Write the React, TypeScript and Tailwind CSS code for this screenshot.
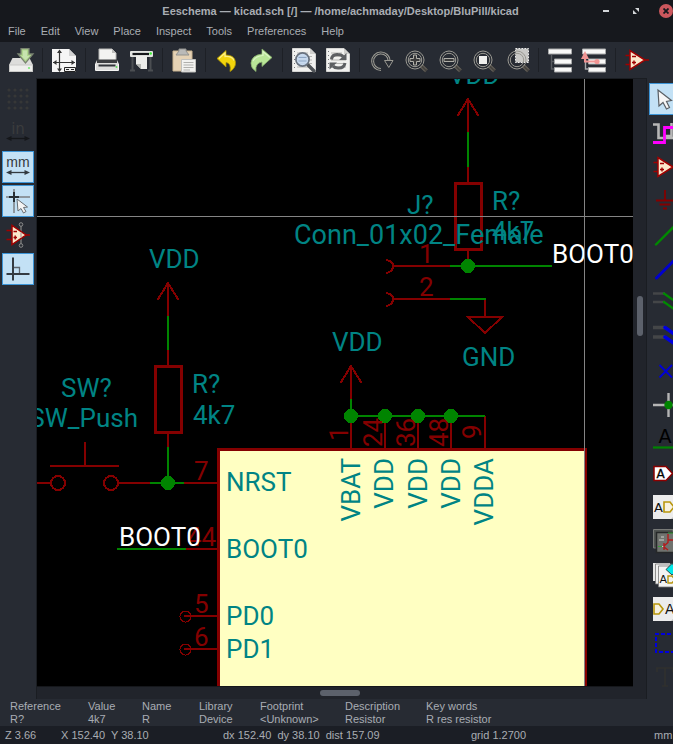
import React from "react";

const RED = "#840000";
const GREEN = "#008400";
const TEAL = "#008484";

/* ---------- icon helpers ---------- */

function Icon({ children }: { children: React.ReactNode }) {
  return (
    <svg width="24" height="24" viewBox="0 0 24 24" className="block shrink-0 overflow-visible" fill="none" aria-hidden="true">
      {children}
    </svg>
  );
}

function Lens({ children }: { children?: React.ReactNode }) {
  return (
    <g transform="translate(1.5 1)">
      <path d="M16.5 16.5 L22 22" stroke="#45433f" strokeWidth="4" />
      <path d="M16 18 L20.5 22.5 M18 16 L22.5 20.5" stroke="#77746c" strokeWidth="0.8" />
      <circle cx="10.5" cy="11" r="9" stroke="#9a9992" strokeWidth="1" />
      <circle cx="10.5" cy="11" r="6.7" stroke="#9a9992" strokeWidth="1" />
      {children}
    </g>
  );
}

function OpAmp() {
  return (
    <>
      <path d="M0.5 7.5 H5 M0.5 16.5 H5 M19 12 H24" stroke="#a00000" strokeWidth="1.5" />
      <path d="M5 2.5 V21.5 L20 12 Z" fill="#fbe9cc" stroke="#a00000" strokeWidth="1.5" />
      <path d="M7 8.5 H11 M7 14.5 H11 M9 12.5 V16.5" stroke="#a00000" strokeWidth="1.4" />
    </>
  );
}

function Sheet() {
  return (
    <>
      <path d="M0.5 0.5 H18 L23.5 6 V23.5 H0.5 Z" fill="#f1f1ef" stroke="#d4d4d2" />
      <path d="M18 0.5 V6 H23.5 Z" fill="#cfcfcc" />
      <path d="M2.5 3 V22" stroke="#77797c" strokeDasharray="1 3" />
      <path d="M5 5 H16 M5 8.5 H20 M5 12 H20 M5 15.5 H20 M5 19 H20" stroke="#b5b5b2" />
    </>
  );
}

const icons = {
  save: (
    <Icon>
      <path d="M3.5 10 H20.5 L24 17 V23 Q24 24 23 24 H1 Q0 24 0 23 V17 Z" fill="#dddddb" />
      <path d="M0.5 17 H23.5 V23.5 H0.5 Z" fill="#efefed" stroke="#c9c9c7" />
      <circle cx="20" cy="20" r="1.1" fill="#7bea77" />
      <path d="M12 0.7 H20 V6 H24 L16.5 15 L9 6 H12 Z" fill="#afd68d" stroke="#7a8471" strokeWidth="1.3" />
      <path d="M14 2.5 H18 V8 H20.5 L16.5 12 L12.5 8 H14 Z" fill="#c7e3af" />
    </Icon>
  ),
  page: (
    <Icon>
      <path d="M0 1 H17 L24 8 V24 H0 Z" fill="#f5f5f5" />
      <path d="M17 1 V8 H24 Z" fill="#d2d2d2" />
      <path d="M7.5 3 V23 M1 14.5 H23" stroke="#333" strokeWidth="1.2" />
      <path d="M7.5 1.5 L10 5 H5 Z M7.5 24 L10 20.5 H5 Z M1 14.5 L4.5 12 V17 Z M23 14.5 L19.5 12 V17 Z" fill="#333" />
      <path d="M12.5 19.5 H23.5 V23.5 H12.5 Z" fill="#eee" stroke="#222" />
      <path d="M14 21.5 H17 M19 21.5 H22" stroke="#222" />
    </Icon>
  ),
  print: (
    <Icon>
      <path d="M4 1 H17 L21 5 V13 H4 Z" fill="#f3f3f1" stroke="#b8b8b6" />
      <path d="M17 1 V5 H21 Z" fill="#bcbcba" />
      <path d="M2 12 H22 L24 16 V22 H0 V16 Z" fill="#dededc" />
      <path d="M2 11.5 H22 V15 H2 Z" fill="#3c3e40" />
      <path d="M3.5 17.5 H20.5" stroke="#33363a" strokeWidth="2" />
      <path d="M0.5 16 V22.5 H23.5 V16" stroke="#f6f6f4" />
      <circle cx="21.5" cy="19" r="1" fill="#5fe05a" />
    </Icon>
  ),
  plot: (
    <Icon>
      <path d="M3.5 8 V23 M21.5 8 V23" stroke="#4b4e52" strokeWidth="2" />
      <path d="M1 22.5 H6 M19 22.5 H24" stroke="#4b4e52" strokeWidth="2" />
      <path d="M2 3 H23 Q24 3 24 4 V8 Q24 9 23 9 H2 Q1 9 1 8 V4 Q1 3 2 3 Z" fill="#e2e4e1" />
      <path d="M3.5 6 H20" stroke="#15171a" strokeWidth="2.2" />
      <circle cx="21.7" cy="5.5" r="1.2" fill="#38f030" />
      <path d="M7 7.5 H18 V21 H12 L7 16 Z" fill="#ecedea" />
      <path d="M7 16 H12 V21 Z" fill="#b4b6b2" />
    </Icon>
  ),
  paste: (
    <Icon>
      <path d="M1 3 H20 V23 H1 Z" fill="#e5d2b5" stroke="#c9b491" />
      <path d="M7 1 H14 V3 L17 7 H4 L7 3 Z" fill="#babab8" stroke="#92928f" />
      <path d="M9.5 11.5 H23.5 V24 H9.5 Z" fill="#f2f2f0" stroke="#c0c0bd" />
      <path d="M11.5 14.5 H21.5 M11.5 17 H21.5 M11.5 19.5 H21.5 M11.5 22 H18" stroke="#b0b0ad" />
    </Icon>
  ),
  undo: (
    <Icon>
      <path
        d="M2 10.5 L11 2.5 V7 Q19.5 7 20.5 14 Q21 20 15 23.5 Q16.5 15 11 14.5 V19 Z"
        fill="#f2d40c"
        stroke="#a89204"
        strokeWidth="0.8"
      />
      <path d="M4 10.5 L10 5 V8.5 Q17 8 19 12.5" stroke="#fbee86" strokeWidth="1.3" />
    </Icon>
  ),
  redo: (
    <Icon>
      <path
        d="M23 9.5 L13 1 V6 Q3 7 2 15 Q1.5 20 7 23.5 Q6 15 13 14 V18.5 Z"
        fill="#b9e698"
        stroke="#87ad6c"
        strokeWidth="0.8"
      />
      <path d="M21 9.5 L14 3.5 V7.5 Q6 8.5 4 13" stroke="#dbf5c6" strokeWidth="1.2" />
    </Icon>
  ),
  find: (
    <Icon>
      <Sheet />
      <path d="M16 17 L22 23" stroke="#505458" strokeWidth="3.4" strokeLinecap="round" />
      <circle cx="10.5" cy="11.5" r="6.6" fill="#c3d7ee" fillOpacity="0.9" stroke="#68727f" strokeWidth="1.7" />
      <path d="M6.5 9.5 H14.5 M6.5 13 H14.5" stroke="#8ea6c4" />
    </Icon>
  ),
  replace: (
    <Icon>
      <Sheet />
      <path d="M5.5 11.5 Q6 6 12 6.5 Q15.5 6.5 17 8.5" stroke="#5d5f62" strokeWidth="3" />
      <path d="M20.5 5 V12 H13 Z" fill="#5d5f62" />
      <path d="M19 15 Q18 20.5 12 20 Q8.5 20 7 18" stroke="#5d5f62" strokeWidth="3" />
      <path d="M3.5 21.5 V14.5 H11 Z" fill="#5d5f62" />
    </Icon>
  ),
  redraw: (
    <Icon>
      <g transform="translate(1 1)">
        <path d="M11 20.5 A8.3 8.3 0 1 1 19.2 12" stroke="#9a9992" strokeWidth="3" />
        <path d="M11.5 20.5 A8.3 8.3 0 1 1 19.2 12" stroke="#292d34" strokeWidth="1" />
        <path d="M14.5 11.5 H23 L18.8 18.5 Z" fill="#292d34" stroke="#9a9992" />
      </g>
    </Icon>
  ),
  zoomIn: (
    <Icon>
      <Lens>
        <path d="M9 6 H12 V9.5 H15.5 V12.5 H12 V16 H9 V12.5 H5.5 V9.5 H9 Z" stroke="#b0afa8" fill="#3a3a3a" />
      </Lens>
    </Icon>
  ),
  zoomOut: (
    <Icon>
      <Lens>
        <path d="M5.5 9.5 H15.5 V12.5 H5.5 Z" stroke="#b0afa8" fill="#3a3a3a" />
      </Lens>
    </Icon>
  ),
  zoomFit: (
    <Icon>
      <Lens>
        <path d="M6.5 7 H14.5 V15 H6.5 Z" fill="#efefed" />
      </Lens>
    </Icon>
  ),
  zoomArea: (
    <Icon>
      <path d="M10.5 0.5 H23.5 V14.5 H10.5 Z" fill="#c9c9c7" stroke="#eee" strokeDasharray="1.5 1.5" />
      <Lens />
    </Icon>
  ),
  hierarchy: (
    <Icon>
      <path d="M3.5 7 V21 H8 M3.5 13.5 H8" stroke="#575a5f" strokeWidth="1.4" />
      <path d="M0.5 1 H23.5 V6 H0.5 Z M6.5 11 H23.5 V16 H6.5 Z M6.5 19.5 H23.5 V24 H6.5 Z" fill="#f8f8f7" stroke="#a7a8a9" />
    </Icon>
  ),
  leave: (
    <Icon>
      <path d="M3.5 7 V21 H8" stroke="#a5a8aa" strokeWidth="1.4" />
      <path d="M0.5 1 H23.5 V6 H0.5 Z M6.5 11 H23.5 V16 H6.5 Z M6.5 19.5 H23.5 V24 H6.5 Z" fill="#f8f8f7" stroke="#a7a8a9" />
      <path d="M3 9 V13.5 H15" stroke="#ef9493" strokeWidth="2" />
      <path d="M3 3 L7 11 H-1 Z" fill="#ef9493" />
      <circle cx="15" cy="13.5" r="2.6" fill="#ef9493" />
    </Icon>
  ),
  opamp: (
    <Icon>
      <OpAmp />
    </Icon>
  ),
  grid: (
    <Icon>
      <g fill="#363737">
        {[3, 9, 15, 21].map((y) => [3, 9, 15, 21].map((x) => <circle key={`${x}-${y}`} cx={x} cy={y} r="1.6" />))}
      </g>
    </Icon>
  ),
  inches: (
    <Icon>
      <text x="12" y="13" textAnchor="middle" fontSize="15" fill="#3b3c3d" fontFamily="DejaVu Sans, sans-serif">
        in
      </text>
      <path d="M3 17.5 H21" stroke="#15171a" strokeWidth="1.3" />
      <path d="M0 17.5 L5.5 15 V20 Z M24 17.5 L18.5 15 V20 Z" fill="#15171a" />
    </Icon>
  ),
  mm: (
    <Icon>
      <text x="12" y="12" textAnchor="middle" fontSize="14" fill="#333a40" fontFamily="Liberation Sans, sans-serif">
        mm
      </text>
      <path d="M3 17.5 H21" stroke="#333a40" strokeWidth="1.3" />
      <path d="M0 17.5 L5.5 15 V20 Z M24 17.5 L18.5 15 V20 Z" fill="#333a40" />
    </Icon>
  ),
  cursorShape: (
    <Icon>
      <path d="M0 8 H24 M8 0 V24" stroke="#8d979f" strokeWidth="2" />
      <path d="M3 8 H13 M8 3 V13" stroke="#262d33" strokeWidth="2" />
      <path d="M11 10 L12 22 L15 19.5 L17.5 24 L20 22.5 L17.5 18.5 L21.5 18 Z" fill="#f4f4f4" stroke="#666b70" />
    </Icon>
  ),
  hiddenPins: (
    <Icon>
      <path d="M15 2 V23" stroke="#747474" strokeWidth="1.5" />
      <path d="M0.5 7.5 H6 M0.5 16.5 H6 M19 12 H24" stroke="#a00000" strokeWidth="1.5" />
      <path d="M6 2.5 V21.5 L20 12 Z" fill="#fbe9cc" stroke="#a00000" strokeWidth="1.5" />
      <path d="M7.5 8.5 H11 M7.5 14.5 H11 M9.2 12.5 V16.5" stroke="#a00000" strokeWidth="1.4" />
      <path d="M15 9.5 V14.5" stroke="#b9a6a0" strokeWidth="1.5" />
      <circle cx="15" cy="1.5" r="1.8" fill="#292d34" stroke="#8a8a8a" />
      <circle cx="15" cy="22.5" r="1.8" fill="#292d34" stroke="#8a8a8a" />
    </Icon>
  ),
  rightAngle: (
    <Icon>
      <path d="M7 0.5 V23.5 M0.5 17 H23.5" stroke="#343b42" strokeWidth="2" />
      <path d="M8 10.5 H13.5 V16" stroke="#5d666e" strokeWidth="1.3" />
    </Icon>
  ),
  arrow: (
    <Icon>
      <path d="M5 3 L6 19 L10 15.5 L13.5 22 L16.5 20.5 L13.5 14.5 L18.5 13.5 Z" fill="#f6f6f6" stroke="#5a5f64" strokeWidth="1.2" />
    </Icon>
  ),
  highlight: (
    <Icon>
      <path d="M0 3.5 H5.5 V17 H24 M12 15 H18.5 V2" stroke="#b7b7b7" strokeWidth="2.6" />
      <path d="M0 21.5 H11.5 V6.5 H24" stroke="#ff00ff" strokeWidth="2.8" />
    </Icon>
  ),
  power: (
    <Icon>
      <path d="M12 1 V11 M3 11.5 H21 M6.5 15.5 H17.5 M10 19.5 H14" stroke="#840000" strokeWidth="1.8" />
    </Icon>
  ),
  wire: (
    <Icon>
      <path d="M3 21.5 L23 1.5" stroke="#008a00" strokeWidth="2.4" strokeLinecap="round" />
    </Icon>
  ),
  bus: (
    <Icon>
      <path d="M3.5 21 L23 1.5" stroke="#0000d0" strokeWidth="3" strokeLinecap="round" />
    </Icon>
  ),
  wireEntry: (
    <Icon>
      <path d="M0 2.5 H12 M0 11 H12" stroke="#444648" strokeWidth="2.5" />
      <path d="M11 2.5 L21 9.5 M11 11 L21 18" stroke="#008a00" strokeWidth="2.2" strokeLinecap="round" />
    </Icon>
  ),
  busEntry: (
    <Icon>
      <path d="M0 2.5 H12 M0 12 H12" stroke="#444648" strokeWidth="3.5" />
      <path d="M12 2.5 L22 9.5 M12 12 L22 19" stroke="#0000e0" strokeWidth="3.5" strokeLinecap="round" />
    </Icon>
  ),
  noConnect: (
    <Icon>
      <path d="M6.5 6 L19 18.5 M19 6 L6.5 18.5" stroke="#0000d8" strokeWidth="1.8" />
    </Icon>
  ),
  junction: (
    <Icon>
      <path d="M0 12 H24 M15.5 0 V24" stroke="#b5b5b5" strokeWidth="2.4" />
      <circle cx="15.5" cy="12" r="4.2" fill="#008400" />
    </Icon>
  ),
  netLabel: (
    <Icon>
      <text x="12" y="16" textAnchor="middle" fontSize="19" fill="#000" fontFamily="DejaVu Sans, sans-serif">
        A
      </text>
      <path d="M0 20.5 H24" stroke="#008400" strokeWidth="2.2" />
    </Icon>
  ),
  globalLabel: (
    <Icon>
      <path d="M1 5.5 H13 L19.5 12.5 L13 19.5 H1 Z" fill="#fff" stroke="#8c0000" strokeWidth="1.5" />
      <text x="7.5" y="17" textAnchor="middle" fontSize="12" fill="#000" stroke="#000" strokeWidth="0.3" fontFamily="DejaVu Sans, sans-serif">
        A
      </text>
    </Icon>
  ),
  hierLabel: (
    <Icon>
      <path d="M0 0 H24 V24 H0 Z" fill="#ececec" />
      <text x="1" y="17" fontSize="13" fill="#111" fontFamily="DejaVu Sans, sans-serif">
        A
      </text>
      <path d="M11 7 H17 L21 12 L17 17 H11 Z" fill="#f7f1df" stroke="#b8960c" strokeWidth="1.6" />
      <path d="M18 24 L24 18 V24 Z" fill="#bbb" />
    </Icon>
  ),
  sheet: (
    <Icon>
      <path d="M0.5 0.5 H20 V19 H0.5 Z" fill="#505452" stroke="#787a78" />
      <path d="M3.5 3.5 H24 V23.5 H3.5 Z" fill="#70736f" stroke="#262829" strokeWidth="1.5" />
      <path d="M6 11 H11 M8 8 H11 M6 17.5 H11" stroke="#cfd0cc" />
      <path d="M11 14 V21 M11 17 L15 13.5 V5 M11 18 L15 21 M15 11 H20" stroke="#b31b1b" strokeWidth="1.4" />
      <path d="M15 4 H24 M5 17.5 H9" stroke="#36a136" />
    </Icon>
  ),
  importPin: (
    <Icon>
      <path d="M0 0 H17 V18 H0 Z" fill="#e6e6e6" />
      <path d="M2.5 1 H20 V21 H2.5 Z" fill="#efefef" stroke="#777" strokeWidth="0.8" />
      <path d="M5.5 3 H24 V24 H5.5 Z" fill="#f3f3f3" stroke="#777" strokeWidth="0.8" />
      <text x="6.5" y="20" fontSize="11" fill="#111" fontFamily="DejaVu Sans, sans-serif">
        A
      </text>
      <path d="M15 13 H19 L22 16.5 L19 20 H15 Z" stroke="#b8960c" strokeWidth="1.4" />
      <path d="M13 6.5 L19 0.5 L25 6.5 L19 12 Z" fill="#00e8e8" stroke="#222" strokeWidth="0.8" />
    </Icon>
  ),
  sheetPin: (
    <Icon>
      <path d="M0 0 H24 V24 H0 Z" fill="#ececec" />
      <path d="M1 7 H6 L10 12 L6 17 H1 Z" fill="#f7f1df" stroke="#b8960c" strokeWidth="1.6" />
      <text x="12" y="17" fontSize="14" fill="#111" fontFamily="DejaVu Sans, sans-serif">
        A
      </text>
      <path d="M18 24 L24 18 V24 Z" fill="#bbb" />
    </Icon>
  ),
  polyline: (
    <Icon>
      <path d="M24 3 H3 V21 H24" stroke="#0000dd" strokeWidth="2" strokeDasharray="4 2" />
    </Icon>
  ),
  text: (
    <Icon>
      <path d="M4 7 V3 H20 V7 M12 3 V21 M9 21 H15" stroke="#31312f" strokeWidth="1.6" />
    </Icon>
  ),
};

type IconName = keyof typeof icons;
type Tool = { icon: IconName; label: string; active?: boolean };

const topGroups: Tool[][] = [
  [{ icon: "save", label: "Save" }],
  [{ icon: "page", label: "Page settings" }],
  [
    { icon: "print", label: "Print" },
    { icon: "plot", label: "Plot" },
  ],
  [{ icon: "paste", label: "Paste" }],
  [
    { icon: "undo", label: "Undo" },
    { icon: "redo", label: "Redo" },
  ],
  [
    { icon: "find", label: "Find" },
    { icon: "replace", label: "Find and replace" },
  ],
  [
    { icon: "redraw", label: "Redraw" },
    { icon: "zoomIn", label: "Zoom in" },
    { icon: "zoomOut", label: "Zoom out" },
    { icon: "zoomFit", label: "Zoom to fit" },
    { icon: "zoomArea", label: "Zoom to selection" },
  ],
  [
    { icon: "hierarchy", label: "Navigate hierarchy" },
    { icon: "leave", label: "Leave sheet" },
  ],
  [{ icon: "opamp", label: "Symbol editor" }],
];

const leftTools: Tool[] = [
  { icon: "grid", label: "Show grid" },
  { icon: "inches", label: "Inches" },
  { icon: "mm", label: "Millimetres", active: true },
  { icon: "cursorShape", label: "Full-window crosshair", active: true },
  { icon: "hiddenPins", label: "Show hidden pins" },
  { icon: "rightAngle", label: "Right-angle wires", active: true },
];

const rightTools: Tool[] = [
  { icon: "arrow", label: "Select", active: true },
  { icon: "highlight", label: "Highlight net" },
  { icon: "opamp", label: "Place symbol" },
  { icon: "power", label: "Place power port" },
  { icon: "wire", label: "Place wire" },
  { icon: "bus", label: "Place bus" },
  { icon: "wireEntry", label: "Wire to bus entry" },
  { icon: "busEntry", label: "Bus to bus entry" },
  { icon: "noConnect", label: "No connection flag" },
  { icon: "junction", label: "Place junction" },
  { icon: "netLabel", label: "Net label" },
  { icon: "globalLabel", label: "Global label" },
  { icon: "hierLabel", label: "Hierarchical label" },
  { icon: "sheet", label: "Hierarchical sheet" },
  { icon: "importPin", label: "Import sheet pin" },
  { icon: "sheetPin", label: "Sheet pin" },
  { icon: "polyline", label: "Graphic lines" },
  { icon: "text", label: "Place text" },
];

const menus = ["File", "Edit", "View", "Place", "Inspect", "Tools", "Preferences", "Help"];

const details = [
  ["Reference", "R?"],
  ["Value", "4k7"],
  ["Name", "R"],
  ["Library", "Device"],
  ["Footprint", "<Unknown>"],
  ["Description", "Resistor"],
  ["Key words", "R res resistor"],
];

function SideButton({ tool }: { tool: Tool }) {
  return (
    <button
      type="button"
      aria-label={tool.label}
      aria-pressed={tool.active ?? false}
      className={
        tool.active
          ? "flex size-8 shrink-0 items-center justify-center border border-[#3d96d8] bg-[#c3e1f5]"
          : "flex size-8 shrink-0 items-center justify-center"
      }
    >
      {icons[tool.icon]}
    </button>
  );
}

/* ---------- schematic ---------- */

function Supply({ x, y, wire }: { x: number; y: number; wire: number }) {
  return (
    <>
      <path d={`M${x} ${y} V${y + 34} M${x - 10.5} ${y + 18} L${x} ${y + 1} L${x + 10.5} ${y + 18}`} stroke={RED} />
      <path d={`M${x} ${y + 34} V${wire}`} stroke={GREEN} />
    </>
  );
}

function Resistor({ x, y }: { x: number; y: number }) {
  return (
    <>
      <path d={`M${x} ${y - 15} V${y} M${x} ${y + 69} V${y + 82}`} stroke={RED} />
      <rect x={x - 12.5} y={y + 1.5} width="26" height="66" stroke={RED} strokeWidth="3" />
    </>
  );
}

function Vertical({ x, y, children, end }: { x: number; y: number; children: string; end?: boolean }) {
  return (
    <text transform={`translate(${x} ${y}) rotate(-90)`} textAnchor={end ? "end" : "start"}>
      {children}
    </text>
  );
}

const junctions = [
  [468, 266],
  [168, 483],
  [351, 416],
  [385, 416],
  [418, 416],
  [451, 416],
];

function Schematic() {
  return (
    <svg className="block min-h-0 w-full flex-1 bg-black" role="img" aria-label="Schematic sheet">
      <g transform="translate(-37 -79)" fill="none" strokeWidth="2">
        <g shapeRendering="crispEdges">
          <rect x="218.5" y="449.5" width="367" height="900" fill="#ffffc2" stroke={RED} strokeWidth="3" />

          <Supply x={468} y={98} wire={167} />
          <Resistor x={468} y={182} />
          <Supply x={168} y={282} wire={350} />
          <Resistor x={168} y={365} />
          <Supply x={351} y={365} wire={416} />

          <path
            d="M392 266 H450 M386 260 Q393 261 393 266 Q393 272 386 273 M392 299 H450 M386 293 Q393 294 393 299 Q393 305 386 306 M485 299 V317 M468 317 H502 L485 333 Z"
            stroke={RED}
          />
          <path
            d="M37 483 H50 M119 483 H150 M184 483 H218 M186 549 H218 M184 616 H218 M184 649 H218 M50 466 H119 M85 442 V466"
            stroke={RED}
          />
          <path d="M351 416 V448 M385 416 V448 M418 416 V448 M451 416 V448 M485 416 V448" stroke={RED} />
          <circle cx="58" cy="483" r="7" stroke={RED} />
          <circle cx="111" cy="483" r="7" stroke={RED} />
          <circle cx="185.5" cy="616.5" r="5.5" stroke={RED} strokeWidth="1" />
          <circle cx="185.5" cy="649.5" r="5.5" stroke={RED} strokeWidth="1" />
          <path
            d="M450 266 H552 M450 299 H486 M168 447 V483 M150 483 H184 M117 549 H186 M351 416 H485"
            stroke={GREEN}
          />
          {junctions.map(([x, y]) => (
            <circle key={`${x}-${y}`} cx={x} cy={y} r="7" fill={GREEN} />
          ))}
        </g>

        <g className="text-[26px]" fontFamily="Roboto, 'Liberation Sans', sans-serif">
          <g fill={RED}>
            <text x="419" y="263">1</text>
            <text x="419" y="296">2</text>
            <text x="194" y="480">7</text>
            <text x="187" y="546">44</text>
            <text x="194" y="613">5</text>
            <text x="194" y="646">6</text>
            <Vertical x={348} y={441}>1</Vertical>
            <Vertical x={382} y={447}>24</Vertical>
            <Vertical x={415} y={447}>36</Vertical>
            <Vertical x={448} y={447}>48</Vertical>
            <Vertical x={481} y={439}>9</Vertical>
          </g>
          <g fill={TEAL}>
            <text x="449" y="84">VDD</text>
            <text x="407" y="214">J?</text>
            <text x="492" y="210">R?</text>
            <text x="492" y="240">4k7</text>
            <text x="294" y="244" className="text-[27px]">Conn_01x02_Female</text>
            <text x="462" y="366">GND</text>
            <text x="332" y="351">VDD</text>
            <text x="149" y="268">VDD</text>
            <text x="192" y="393">R?</text>
            <text x="193" y="424">4k7</text>
            <text x="61" y="397">SW?</text>
            <text x="138" y="427" textAnchor="end">SW_Push</text>
            <text x="226" y="491">NRST</text>
            <text x="226" y="558">BOOT0</text>
            <text x="226" y="625">PD0</text>
            <text x="226" y="658">PD1</text>
            <Vertical x={360} y={458} end>VBAT</Vertical>
            <Vertical x={393} y={458} end>VDD</Vertical>
            <Vertical x={427} y={458} end>VDD</Vertical>
            <Vertical x={460} y={458} end>VDD</Vertical>
            <Vertical x={493} y={458} end>VDDA</Vertical>
          </g>
          <g fill="#ffffff">
            <text x="552" y="263">BOOT0</text>
            <text x="119" y="546">BOOT0</text>
          </g>
        </g>

        <path d="M584.5 0 V4000 M0 216.5 H4000" stroke="#848484" strokeWidth="1" shapeRendering="crispEdges" />
      </g>
    </svg>
  );
}

/* ---------- window ---------- */

export default function App() {
  return (
    <div className="h-screen bg-white pr-5">
      <div className="flex h-full flex-col overflow-hidden bg-[#272b33] font-['Liberation_Sans',Arial,sans-serif] text-[11px] leading-[13px] text-[#a9adb3]">
        <header className="bg-[#16181d]">
          <div className="flex h-[21px] items-center">
            <div className="w-[88px] shrink-0" />
            <h1 className="min-w-0 flex-1 truncate pt-px text-center font-bold">
              Eeschema — kicad.sch [/] — /home/achmaday/Desktop/BluPill/kicad
            </h1>
            <div className="flex w-20 shrink-0 items-center justify-end gap-4">
              <button type="button" aria-label="Minimise" className="flex size-[14px] items-center justify-center">
                <span className="h-[2px] w-[6px] bg-[#d3d6d9]" />
              </button>
              <button type="button" aria-label="Restore" className="flex size-[14px] items-center justify-center">
                <svg width="6" height="6" viewBox="0 0 6 6" fill="#d3d6d9" aria-hidden="true">
                  <path d="M2 0 H6 V4 Z M0 2 V6 H4 Z" />
                </svg>
              </button>
              <button type="button" aria-label="Close" className="flex size-[14px] items-center justify-center rounded-full bg-[#cc575d]">
                <svg width="6" height="6" viewBox="0 0 6 6" stroke="#16181d" strokeWidth="1.8" aria-hidden="true">
                  <path d="M0.5 0.5 L5.5 5.5 M5.5 0.5 L0.5 5.5" />
                </svg>
              </button>
            </div>
          </div>
          <nav className="flex h-[21px] items-center">
            {menus.map((m) => (
              <button key={m} type="button" className="pr-[7px] pl-2">
                {m}
              </button>
            ))}
          </nav>
        </header>

        <div role="toolbar" aria-label="Main" className="flex h-9 shrink-0 items-center pl-1">
          {topGroups.map((group, i) => (
            <React.Fragment key={i}>
              {i > 0 && <div className="mx-1 h-6 w-px shrink-0 bg-[#1d2026]" />}
              {group.map((t) => (
                <button key={t.label} type="button" aria-label={t.label} className="flex w-[34px] shrink-0 items-center justify-center">
                  {icons[t.icon]}
                </button>
              ))}
            </React.Fragment>
          ))}
        </div>

        <div className="flex min-h-0 flex-1">
          <div role="toolbar" aria-label="Options" className="flex w-9 shrink-0 flex-col gap-[2px] px-[2px] pt-[5px]">
            {leftTools.map((t) => (
              <SideButton key={t.label} tool={t} />
            ))}
          </div>

          <main className="flex min-w-0 flex-1 border-t border-l border-[#1a1d22] bg-[#21242b]">
            <div className="flex min-w-0 flex-1 flex-col">
              <Schematic />
              <div className="flex h-[13px] shrink-0 items-center justify-center border-t border-[#15171b] pl-[10px]">
                <div className="h-[6px] w-10 rounded-full bg-[#5c616b]" />
              </div>
            </div>
            <div className="flex w-[14px] shrink-0 justify-center border-r border-[#1a1d22] pt-[217px]">
              <div className="h-10 w-[6px] rounded-full bg-[#5c616b]" />
            </div>
          </main>

          <div role="toolbar" aria-label="Drawing" className="flex w-[26px] shrink-0 flex-col gap-[2px] overflow-hidden pt-[5px] pl-[2px]">
            {rightTools.map((t) => (
              <SideButton key={t.label} tool={t} />
            ))}
          </div>
        </div>

        <dl className="grid shrink-0 grid-cols-[78px_54px_57px_61px_85px_81px_1fr] pt-px pl-[10px]">
          {details.map(([k, v]) => (
            <div key={k} className="whitespace-nowrap">
              <dt>{k}</dt>
              <dd>{v}</dd>
            </div>
          ))}
        </dl>

        <footer className="grid h-[18px] shrink-0 grid-cols-[56px_162px_248px_183px_1fr] items-center bg-[#1b1e25] pl-[5px] whitespace-pre">
          <span>Z 3.66</span>
          <span>X 152.40  Y 38.10</span>
          <span>dx 152.40  dy 38.10  dist 157.09</span>
          <span>grid 1.2700</span>
          <span>mm</span>
        </footer>
      </div>
    </div>
  );
}
